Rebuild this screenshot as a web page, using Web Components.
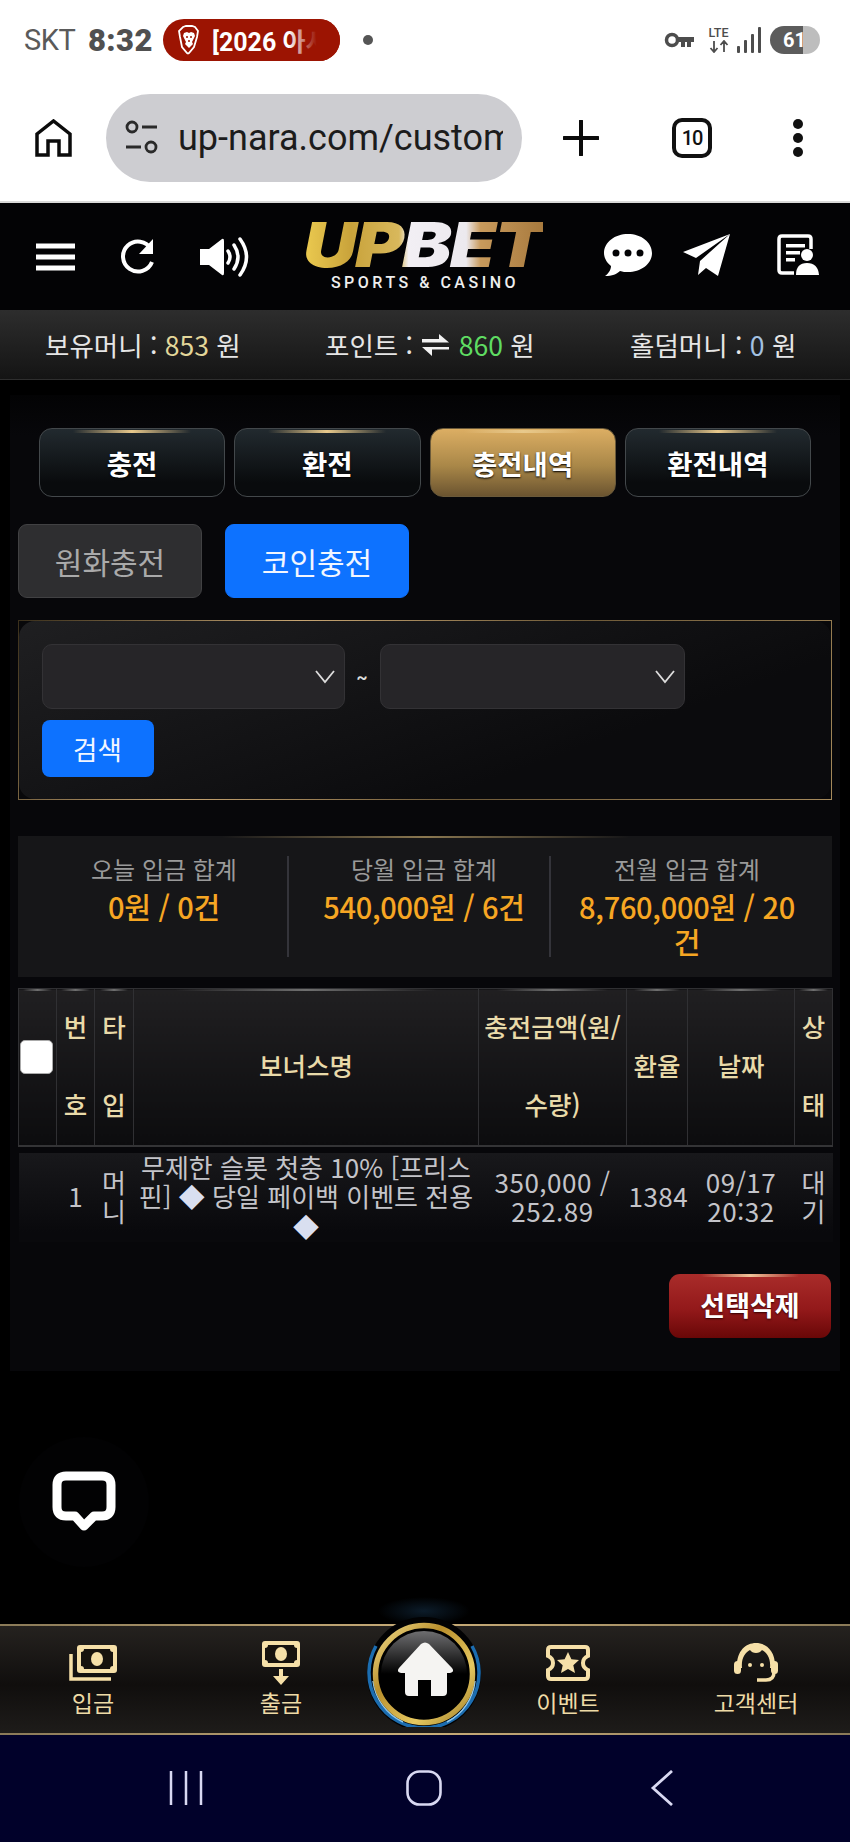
<!DOCTYPE html>
<html lang="ko"><head><meta charset="utf-8"><title>UPBET</title>
<style>
html,body{margin:0;padding:0;background:#000}
body{width:850px;height:1842px;display:flex;flex-direction:column;overflow:hidden;position:relative;font-family:"Noto Sans CJK KR","Noto Sans",Roboto,sans-serif;color:#fff}
money-item span{font-weight:400}
money-item svg{vertical-align:-2px;margin:0 2px}
</style></head><body>
<status-bar></status-bar>
<browser-bar></browser-bar>
<site-header></site-header>
<money-bar>
  <money-item style="width:193px;margin-left:45px">보유머니 : <span style="color:#e3d79a">853</span> 원</money-item>
  <money-item style="width:203px;margin-left:87px">포인트 : <svg width="27" height="24" viewBox="0 0 27 24"><path d="M0 5h17V0l10 8.500H0zM27 15.500H10V22L0 13h27z" fill="#f2f2f2"/></svg> <span style="color:#5fdc62">860</span> 원</money-item>
  <money-item style="width:165px;margin-left:102px">홀덤머니 : <span style="color:#a3c0e0">0</span> 원</money-item>
</money-bar>
<page-main>
  <history-tabs>
    <tab-btn>충전</tab-btn><tab-btn>환전</tab-btn><tab-btn active>충전내역</tab-btn><tab-btn>환전내역</tab-btn>
  </history-tabs>
  <sub-tabs><sub-tab>원화충전</sub-tab><sub-tab active>코인충전</sub-tab></sub-tabs>
  <search-panel></search-panel>
  <deposit-stats>
    <stat-cell style="padding-left:22px" label="오늘 입금 합계">0원 / 0건</stat-cell>
    <stat-cell divided style="padding-left:10px" label="당월 입금 합계">540,000원 / 6건</stat-cell>
    <stat-cell divided style="padding:16px 30px 0 22px" label="전월 입금 합계">8,760,000원 / 20건</stat-cell>
  </deposit-stats>
  <history-table></history-table>
  <delete-bar>선택삭제</delete-bar>
</page-main>
<bottom-nav></bottom-nav>
<android-nav></android-nav>
<chat-fab></chat-fab>
<script>
function def(name, css, html, init){
  customElements.define(name, class extends HTMLElement{
    connectedCallback(){
      if(this.shadowRoot) return;
      const r=this.attachShadow({mode:'open'});
      r.innerHTML='<style>'+css+'</style>'+html;
      if(init) init(this,r);
    }
  });
}
def('status-bar',`
:host{display:flex;align-items:center;height:64px;background:#fff;flex:none;padding-top:16px;box-sizing:border-box;position:relative;font-family:Roboto,sans-serif}
.skt{margin-left:24px;font-size:29px;color:#5a5a5a;width:64px;letter-spacing:-.5px}
.time{font-size:31px;font-weight:900;color:#505050;width:75px;letter-spacing:.4px}
.pill{width:177px;height:42px;border-radius:21px;background:#9c1402;display:flex;align-items:center;overflow:hidden;position:relative;color:#fff;font-weight:700;font-size:25px;white-space:nowrap;font-family:Roboto,"Noto Sans CJK KR",sans-serif}
.pill svg{margin:0 12px 0 15px;flex:none}
.pill::after{content:"";position:absolute;right:0;top:0;bottom:0;width:52px;background:linear-gradient(90deg,rgba(156,20,2,0),#9c1402 55%)}
.dot{width:10px;height:10px;border-radius:50%;background:#555;margin-left:23px}
.right{margin-left:auto;display:flex;align-items:center;margin-right:30px}
.lte{width:25px;margin:0 6px 0 12px;font-size:12.500px;font-weight:500;line-height:12px;color:#4d4d4d;text-align:center}
.lte svg{display:block;margin:1px auto 0}
.batt{width:50px;height:28px;border-radius:14px;margin-left:9px;background:linear-gradient(90deg,#5c5c5c 0 66%,#bdbdbd 66%);color:#fff;font-weight:700;font-size:20px;line-height:28px;text-align:left;padding-left:13px;box-sizing:border-box}
`,`<span class="skt">SKT</span><span class="time">8:32</span>
<div class="pill"><svg width="22" height="30" viewBox="0 0 22 30"><path d="M5 2 8 1h6l3 1 3 4-1 6-3 10-5 6-1 .5-1-.5-5-6L2 12 1 6z" fill="none" stroke="#fff" stroke-width="1.800"/><path d="M6 8l3-1 2 1 2-1 3 1 1 3-3 6 1 2-4 4-4-4 1-2-3-6z" fill="#fff"/><path d="M8 12h2M12 12h2M10 16h2" stroke="#9c1402" stroke-width="1.600"/></svg><span>[2026 아시</span></div>
<div class="dot"></div>
<div class="right">
<svg width="30" height="19" viewBox="0 0 30 19"><circle cx="8" cy="9" r="5.500" fill="none" stroke="#4d4d4d" stroke-width="3.500"/><path d="M13 6h17v5h-3v5h-4v-5h-2v5h-4v-5h-4z" fill="#4d4d4d"/></svg>
<div class="lte">LTE<svg width="20" height="13" viewBox="0 0 20 13"><path d="M5 1v11M1.500 8 5 12l3.500-4M15 12V1M11.500 5 15 1l3.500 4" fill="none" stroke="#4d4d4d" stroke-width="1.800"/></svg></div>
<svg width="24" height="28" viewBox="0 0 24 28"><g fill="#4d4d4d"><rect x="0" y="20" width="3" height="7" rx="1"/><rect x="7" y="14" width="3" height="13" rx="1"/><rect x="14" y="8" width="3" height="19" rx="1"/><rect x="21" y="1" width="3" height="26" rx="1"/></g></svg>
<div class="batt">61</div></div>`);
def('browser-bar',`
:host{display:flex;align-items:center;height:139px;background:#fff;flex:none;box-sizing:border-box;border-bottom:2px solid #d9d9d9;padding-top:10px;position:relative}
.home{margin-left:35px;width:37px}
.url{margin-left:34px;width:416px;height:88px;border-radius:44px;background:#cdcdd1;display:flex;align-items:center;padding-left:19px;box-sizing:border-box;position:relative;overflow:hidden}
.txt{margin-left:20px;font:36px/44px Roboto,sans-serif;color:#1c1c1c;white-space:nowrap;width:325px;overflow:hidden}
.plus{margin-left:41px}.tabs{margin-left:73px;width:40px;height:40px;box-sizing:border-box;border:4px solid #111;border-radius:10px;font:500 20px/32px Roboto,sans-serif;color:#111;text-align:center;letter-spacing:-1px}
.dots{margin-left:80px}
`,`<svg class="home" width="37" height="38" viewBox="0 0 37 38"><path d="M2 36V15L18.500 2 35 15v21H24V22H13v14z" fill="none" stroke="#0b0b0b" stroke-width="3.500" stroke-linejoin="miter"/></svg>
<div class="url"><svg width="33" height="35" viewBox="0 0 33 35"><g fill="none" stroke="#2a2a2a" stroke-width="2.800"><circle cx="7" cy="7" r="5"/><circle cx="26" cy="27" r="5"/><path d="M17 7h15M1 27h15"/></g></svg><div class="txt">up-nara.com/custom</div></div>
<svg class="plus" width="36" height="36" viewBox="0 0 36 36"><path d="M18 1v34M1 18h34" stroke="#0b0b0b" stroke-width="4" stroke-linecap="round"/></svg>
<div class="tabs">10</div>
<svg class="dots" width="12" height="38" viewBox="0 0 12 38"><g fill="#111"><circle cx="6" cy="5" r="5"/><circle cx="6" cy="19" r="5"/><circle cx="6" cy="33" r="5"/></g></svg>`);
def('site-header',`
:host{display:flex;align-items:center;height:107px;background:#030305;flex:none;box-sizing:border-box;padding-left:36px}
svg{display:block;flex:none}
.up-i{margin-bottom:4px}
.logo{margin-left:52px;margin-right:3px;width:240px;flex:none;display:flex;flex-direction:column;align-items:center}
.up{font:italic 900 62px/50px Inter,"Liberation Sans",sans-serif;letter-spacing:-1.5px;width:200px;text-align:center;white-space:nowrap;transform:scaleX(1.2);background:linear-gradient(90deg,#eccb50 0,#c9a33b 20%,#d8b85c 40%,#f2eff4 44%,#ece9ee 68%,#c89a5c 74%,#a87a3e 100%);-webkit-background-clip:text;background-clip:text;color:transparent}
.sub{font:500 16px/20px Roboto,sans-serif;letter-spacing:3.500px;color:#eee;white-space:nowrap;margin-top:3px;position:relative;left:2px}
`,`<svg width="39" height="28" viewBox="0 0 39 28"><path d="M0 3h39M0 14h39M0 25h39" stroke="#fff" stroke-width="5"/></svg>
<svg style="margin-left:44px" width="37" height="38" viewBox="0 0 37 38"><path d="M32 11A15 15 0 1 0 33 24" fill="none" stroke="#fff" stroke-width="4"/><path d="M34 1v15H20z" fill="#fff"/></svg>
<svg style="margin-left:43px" width="52" height="40" viewBox="0 0 52 40"><path d="M1 12h9L23 2q2-1 2 2v32q0 3-2 2L10 28H1z" fill="#fff"/><g fill="none" stroke="#fff" stroke-linecap="round" stroke-width="3.500"><path d="M29 14q4 6 0 12"/><path d="M35 8q8 12 0 24"/><path d="M41 2q13 18 0 36"/></g></svg>
<div class="logo"><div class="up">UPBET</div><div class="sub">SPORTS &amp; CASINO</div></div>
<svg class="up-i" style="margin-left:58px" width="48" height="42" viewBox="0 0 48 42"><path d="M24 0c13 0 24 8 24 19S37 38 24 38c-3 0-5 0-8-1-3 3-8 5-15 5 3-2 6-6 6-10C3 29 0 24 0 19 0 8 11 0 24 0z" fill="#fff"/><g fill="#030305"><circle cx="12" cy="19" r="3.500"/><circle cx="24" cy="19" r="3.500"/><circle cx="36" cy="19" r="3.500"/></g></svg>
<svg class="up-i" style="margin-left:31px" width="47" height="42" viewBox="0 0 47 42"><path d="M47 0 0 18l13 6L47 0zM47 0 17 27l-2 14 8-7 12 8z" fill="#fff"/></svg>
<svg class="up-i" style="margin-left:47px" width="42" height="42" viewBox="0 0 42 42"><path d="M17 39H5q-3 0-3-3V5q0-3 3-3h26q3 0 3 3v10" fill="none" stroke="#fff" stroke-width="3.500"/><path d="M9 10h19v3.500H9zM9 17h14v3.500H9zM9 24h9v3.500H9z" fill="#fff"/><circle cx="30" cy="21" r="6" fill="#fff"/><path d="M19 41q0-12 11-12t12 12z" fill="#fff"/></svg>`);
def('money-bar',`
:host{display:flex;align-items:center;height:70px;background:linear-gradient(180deg,#2d2d2d,#141414);flex:none;border-bottom:1px solid #2e2e2e;box-sizing:border-box;font-size:26.500px}
`,`<slot></slot>`);
def('money-item',`
:host{display:block;white-space:nowrap;color:#e6e6e6;flex:none}
`,`<slot></slot>`);
def('page-main',`
:host{display:block;flex:1;background:#000;padding:15px 10px 0;box-sizing:border-box;min-height:0}
.in{background:linear-gradient(180deg,#030304,#07070a 40px);padding-top:33px;padding-bottom:33px;box-sizing:border-box}
`,`<div class="in"><slot></slot></div>`);
def('history-tabs',`
:host{display:grid;grid-template-columns:repeat(4,1fr);gap:9px;margin:0 29px}
`,`<slot></slot>`);
def('tab-btn',`
:host{display:flex;align-items:center;justify-content:center;height:69px;box-sizing:border-box;border-radius:13px;border:1.500px solid #43484b;background:linear-gradient(180deg,#222a2f,#090b0d 80%);font-weight:700;font-size:27.500px;color:#fff;position:relative;text-shadow:0 1px 2px #000;overflow:hidden}
:host([active]){background:linear-gradient(180deg,#dcae63,#a98748 55%,#6b5430);border-color:#6b5a3a}
.g{position:absolute;top:1px;left:18%;right:18%;height:3px;background:linear-gradient(90deg,transparent,#e8c98c,transparent)}
`,`<div class="g"></div><slot></slot>`);
def('sub-tabs',`
:host{display:flex;gap:23px;margin:27px 0 0 8px}
`,`<slot></slot>`);
def('sub-tab',`
:host{display:flex;align-items:center;justify-content:center;width:184px;height:74px;box-sizing:border-box;border-radius:9px;background:#2e2e30;border:1px solid #414143;color:#aaa;font-size:30px;font-weight:400}
:host([active]){background:#0d72ff;border-color:#0d72ff;color:#f2f6ff}
`,`<slot></slot>`);
def('search-panel',`
:host{display:block;margin:22px 8px 0;height:180px;box-sizing:border-box;border:1.500px solid;border-image:linear-gradient(125deg,#3a2f1b,#c7a572 30%,#6e5a38 60%,#a68a5c) 1;background:#08080a}
.f{height:100%;box-sizing:border-box;padding:23px 22.500px;border-radius:16px;background:linear-gradient(160deg,#1f1f21,#0b0b0d 70%)}
.r{display:flex;align-items:center}
.t{width:35px;text-align:center;font:700 17px/20px Roboto,sans-serif;color:#ddd}
.s{width:303px;height:65px;box-sizing:border-box;background:#262528;border:1px solid #333235;border-radius:10px;display:flex;align-items:center;justify-content:flex-end;padding-right:9px}
.s.w{width:305px}
button{display:block;margin-top:11px;width:112px;height:57px;border:0;border-radius:8px;background:#0d72ff;color:#f2f6ff;font:400 26.500px "Noto Sans CJK KR",sans-serif;padding:0}
`,`<div class="f"><div class="r"><div class="s"><svg width="20" height="14" viewBox="0 0 20 14"><path d="M1 1l9 11 9-11" fill="none" stroke="#ddd" stroke-width="1.800"/></svg></div><div class="t">~</div><div class="s w"><svg width="20" height="14" viewBox="0 0 20 14"><path d="M1 1l9 11 9-11" fill="none" stroke="#ddd" stroke-width="1.800"/></svg></div></div><button>검색</button></div>`);
def('deposit-stats',`
:host{display:grid;grid-template-columns:270px 262px 282px;margin:36px 8px 0;height:141px;background:#161618;position:relative}
.g{position:absolute;top:0;left:25%;right:25%;height:2px;background:linear-gradient(90deg,transparent,#8a7750,transparent)}
`,`<div class="g"></div><slot></slot>`);
def('stat-cell',`
:host{display:block;box-sizing:border-box;text-align:center;position:relative;padding-top:16px}
:host([divided])::before{content:"";position:absolute;left:-1px;top:20px;height:101px;width:2px;background:#34343a}
.l{font-size:24px;line-height:34px;color:#9a9a9a}
.v{font-size:29px;line-height:35px;color:#f6a623;font-weight:500;margin-top:3px;letter-spacing:-.3px}
`,`<div class="l"></div><div class="v"><slot></slot></div>`,(h,r)=>{r.querySelector('.l').textContent=h.getAttribute('label')});
def('history-table',`
:host{display:block;margin:11px 8px 0}
table{border-collapse:collapse;table-layout:fixed;width:814px}
th{height:156px;padding:0 2px;box-sizing:border-box;font-weight:500;font-size:25.500px;line-height:78px;color:#e9daa9;background:linear-gradient(180deg,#201f21,#0c0c0e);border:1.500px solid #303033;border-bottom:2.500px solid #343436;position:relative}
th span{position:relative;top:-2px}
th::before{content:"";position:absolute;top:0;left:12%;right:12%;height:2px;background:linear-gradient(90deg,transparent,#6f6f6f,transparent)}
td{height:96px;padding:3px 2px 0;box-sizing:border-box;font-size:26px;line-height:29.500px;color:#c4c4c9;text-align:center;background:linear-gradient(180deg,#07070a 0 6px,#18181b 6px,#09090c 90%);}
td b{font-weight:400;color:#d9dff0}
.n{letter-spacing:.5px}
th .cb{display:block;top:0;width:33px;height:34px;border-radius:5px;background:#fff;border:1px solid #aaa;box-sizing:border-box;margin:-20px 0 0 -1px}
`,`<table><colgroup><col style="width:38px"><col style="width:38px"><col style="width:39px"><col style="width:345px"><col style="width:148px"><col style="width:61px"><col style="width:107px"><col style="width:38px"></colgroup>
<thead><tr><th><span class="cb"></span></th><th><span>번호</span></th><th><span>타입</span></th><th><span>보너스명</span></th><th><span>충전금액(원/수량)</span></th><th><span>환율</span></th><th><span>날짜</span></th><th><span>상태</span></th></tr></thead>
<tbody><tr><td></td><td>1</td><td>머니</td><td>무제한 슬롯 첫충 10% [프리스핀] <b>◆</b> 당일 페이백 이벤트 전용 <b>◆</b></td><td class="n">350,000 / 252.89</td><td class="n">1384</td><td class="n">09/17 20:32</td><td>대기</td></tr></tbody></table>`);
def('delete-bar',`
:host{display:block;margin:32px 9px 0 auto;width:162px;height:64px;box-sizing:border-box;border-radius:11px;background:linear-gradient(180deg,#a92c2a,#93191a 55%,#690707);font-weight:700;font-size:27px;line-height:62px;text-align:center;color:#fff;position:relative;overflow:hidden;text-shadow:0 1px 2px #300}
.g{position:absolute;top:0;left:20%;right:20%;height:3px;background:linear-gradient(90deg,transparent,#efc49a,transparent)}
`,`<div class="g"></div><slot></slot>`);
def('chat-fab',`
:host{display:flex;align-items:center;justify-content:center;position:absolute;left:19px;top:1437px;width:130px;height:130px;border-radius:50%;background:#020203}
`,`<svg width="64" height="62" viewBox="0 0 64 62"><path d="M14 5h36q9 0 9 9v22q0 9-9 9H42L32 55 23 45h-9q-9 0-9-9V14q0-9 9-9z" fill="none" stroke="#fff" stroke-width="9" stroke-linejoin="round"/></svg>`);
def('bottom-nav',`
:host{display:grid;grid-template-columns:186px 190px 98px 188px 188px;height:111px;flex:none;box-sizing:border-box;position:relative;background:linear-gradient(180deg,#25221f,#100e0d 55%,#1e1c1a);border-top:2px solid;border-bottom:2px solid;border-image:linear-gradient(90deg,#8a7a58,#c9ad78 50%,#8a7a58) 1}
.home{position:absolute;left:359px;top:-29px;display:block}
`,`<slot></slot>
<nav-item label="입금"><svg width="48" height="36" viewBox="0 0 48 36"><path d="M2 9v25h40" fill="none" stroke="#f6e0a8" stroke-width="3.500"/><rect x="8" y="0" width="40" height="28" rx="3" fill="#f6e0a8"/><path d="M15 4h26q0 3 3 3v14q-3 0-3 3H15q0-3-3-3V7q3 0 3-3z" fill="#17130e"/><ellipse cx="28" cy="14" rx="6" ry="7" fill="#f6e0a8"/></svg></nav-item>
<nav-item label="출금"><svg width="38" height="44" viewBox="0 0 38 44"><rect x="0" y="0" width="38" height="26" rx="3" fill="#f6e0a8"/><path d="M6 4h26q0 3 3 3v12q-3 0-3 3H6q0-3-3-3V7q3 0 3-3z" fill="#17130e"/><ellipse cx="19" cy="13" rx="6" ry="7" fill="#f6e0a8"/><path d="M17 28h4v7h6l-8 9-8-9h6z" fill="#f6e0a8"/></svg></nav-item>
<div></div>
<nav-item label="이벤트"><svg width="44" height="36" viewBox="0 0 44 36"><path d="M5 2h34q3 0 3 3v6q-5 2-5 7t5 7v6q0 3-3 3H5q-3 0-3-3v-6q5-2 5-7t-5-7V5q0-3 3-3z" fill="none" stroke="#f6e0a8" stroke-width="4"/><path d="M22 7l3.400 7.200 7.600.8-5.700 5.200 1.700 7.800L22 24l-7 4 1.700-7.800L11 15l7.600-.8z" fill="#f6e0a8"/></svg></nav-item>
<nav-item label="고객센터"><svg width="44" height="41" viewBox="0 0 44 41"><path d="M3 26C2 10 11 1 22 1s20 9 19 25h-5c1-10-3-15-8-18q-2 3-6 3t-6-3c-5 3-9 8-8 18z" fill="#f6e0a8"/><rect x="0" y="19" width="7" height="13" rx="3.500" fill="#f6e0a8"/><rect x="37" y="19" width="7" height="13" rx="3.500" fill="#f6e0a8"/><path d="M40 30q0 8-8 8h-9" fill="none" stroke="#f6e0a8" stroke-width="3.500"/><circle cx="16" cy="23" r="2" fill="#f6e0a8"/><circle cx="28" cy="23" r="2" fill="#f6e0a8"/></svg></nav-item>
<svg class="home" width="130" height="130" viewBox="0 -12 130 130"><defs>
<radialGradient id="gl" cx=".5" cy=".5" r=".5"><stop offset="0" stop-color="#0c1c2a"/><stop offset="1" stop-color="#0c1c2a" stop-opacity="0"/></radialGradient>
<linearGradient id="gd" x1="0" y1="0" x2="1" y2="1"><stop offset="0" stop-color="#f3df8e"/><stop offset=".35" stop-color="#b98f2c"/><stop offset=".7" stop-color="#e6c860"/><stop offset="1" stop-color="#9c7a24"/></linearGradient>
<linearGradient id="gr" x1="0" y1="0" x2="0" y2="1"><stop offset="0" stop-color="#6e6e70"/><stop offset=".5" stop-color="#000"/></linearGradient>
<clipPath id="cp"><rect x="-10" y="-12" width="150" height="130"/></clipPath></defs>
<g clip-path="url(#cp)"><ellipse cx="65" cy="2" rx="46" ry="14" fill="url(#gl)"/>
<circle cx="65" cy="65" r="57" fill="#020203"/>
<path d="M17 37A55 55 0 1 0 113 37" fill="none" stroke="#1c6db0" stroke-width="3.500"/>
<path d="M14 72A52 52 0 0 0 44 113M116 72A52 52 0 0 1 88 113" fill="none" stroke="#8fc8ef" stroke-width="1.500"/>
<circle cx="65" cy="65" r="48.500" fill="#000" stroke="url(#gd)" stroke-width="5.500"/>
<circle cx="65" cy="65" r="43" fill="url(#gr)"/>
<path d="M62 35q4-3 8 0l23 24q3 4-2 5h-3v19q0 4-4 4H72V71H59v16H50q-4 0-4-4V64h-4q-5-1-2-5z" fill="#f5f4f2"/></g></svg>`);
def('nav-item',`
:host{display:flex;flex-direction:column;align-items:center;padding-top:13px;box-sizing:border-box}
.i{height:47px;display:flex;align-items:center;justify-content:center}
.l{font-size:23px;line-height:32px;color:#eedba6;white-space:nowrap}
`,`<div class="i"><slot></slot></div><div class="l"></div>`,(h,r)=>{r.querySelector('.l').textContent=h.getAttribute('label')});
def('android-nav',`
:host{display:flex;height:107px;flex:none;background:#01012a;position:relative;padding-top:35px;box-sizing:border-box}
svg{display:block;flex:none}
`,`<svg style="margin-left:169px" width="34" height="36" viewBox="0 0 34 36"><path d="M2 1v34M17 1v34M32 1v34" stroke="#d9d9f2" stroke-width="2.500"/></svg>
<svg style="margin-left:203px" width="36" height="36" viewBox="0 0 36 36"><rect x="1.500" y="1.500" width="33" height="33" rx="12" fill="none" stroke="#d9d9f2" stroke-width="2.600"/></svg>
<svg style="margin-left:208px" width="24" height="36" viewBox="0 0 24 36"><path d="M22 1 3 18l19 17" fill="none" stroke="#d9d9f2" stroke-width="2.800"/></svg>`);
</script>
</body></html>
